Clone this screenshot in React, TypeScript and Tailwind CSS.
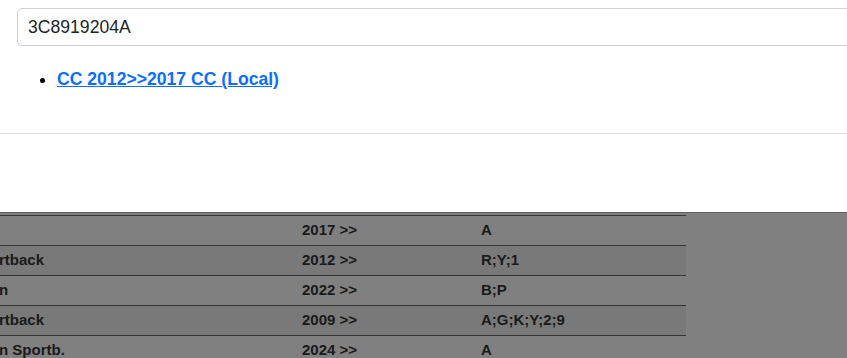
export default function App() {
  const rows = [
    { model: "", year: "2017 >>", codes: "A", shade: "bg-[#808080]" },
    { model: "rtback", year: "2012 >>", codes: "R;Y;1", shade: "bg-[#797979]" },
    { model: "n", year: "2022 >>", codes: "B;P", shade: "bg-[#808080]" },
    { model: "rtback", year: "2009 >>", codes: "A;G;K;Y;2;9", shade: "bg-[#797979]" },
    { model: "n Sportb.", year: "2024 >>", codes: "A", shade: "bg-[#808080]" },
  ]

  return (
    <div className="w-[847px] h-[358px] overflow-hidden bg-[#808080] font-['Liberation_Sans',Arial,sans-serif]">
      <div className="bg-white h-[213px] border-b border-[#5e5e5e]">
        <div className="pt-[8px] pl-[17px]">
          <input
            readOnly
            value="3C8919204A"
            className="w-[860px] h-[38px] border border-[#ced4da] rounded-[5px] pl-[10px] text-[17.6px] text-[#212529] outline-none"
          />
        </div>
        <ul className="list-disc pl-[57px] mt-[20px] text-[17.6px] leading-[26px]">
          <li>
            <a href="#" className="font-bold text-[#0d6efd] underline">
              CC 2012&gt;&gt;2017 CC (Local)
            </a>
          </li>
        </ul>
        <div className="mt-[41px] border-t border-[#dedede]" />
      </div>

      <div className="mt-[2px] w-[686px] border-t border-[#353535] text-[15px] font-bold text-[#1a1a1a]">
        {rows.map((r, i) => (
          <div key={i} className={`grid grid-cols-[294px_179px_213px] h-[30px] items-center border-b border-[#353535] ${r.shade}`}>
            <div className="-ml-[1px] whitespace-nowrap">{r.model}</div>
            <div className="pl-[8px]">{r.year}</div>
            <div className="pl-[8px]">{r.codes}</div>
          </div>
        ))}
      </div>
    </div>
  )
}
